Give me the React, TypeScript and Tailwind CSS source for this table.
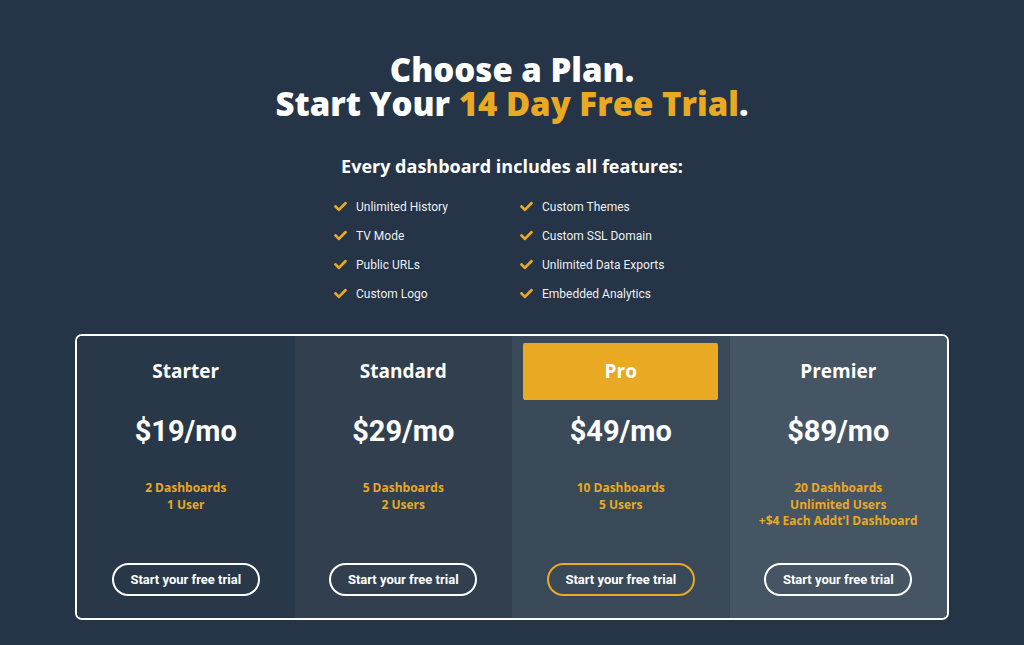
import React from "react";
import { FaCheck } from "react-icons/fa";

const features = [
  ["Unlimited History", "Custom Themes"],
  ["TV Mode", "Custom SSL Domain"],
  ["Public URLs", "Unlimited Data Exports"],
  ["Custom Logo", "Embedded Analytics"],
];

type Plan = {
  name: string;
  price: string;
  lines: string[];
  bg: string;
  highlight?: boolean;
};

const plans: Plan[] = [
  { name: "Starter", price: "$19/mo", lines: ["2 Dashboards", "1 User"], bg: "bg-[#283848]" },
  { name: "Standard", price: "$29/mo", lines: ["5 Dashboards", "2 Users"], bg: "bg-[#313f4f]" },
  { name: "Pro", price: "$49/mo", lines: ["10 Dashboards", "5 Users"], bg: "bg-[#3a4958]", highlight: true },
  {
    name: "Premier",
    price: "$89/mo",
    lines: ["20 Dashboards", "Unlimited Users", "+$4 Each Addt'l Dashboard"],
    bg: "bg-[#465563]",
  },
];

const open = { fontFamily: '"Open Sans", "Noto Sans", sans-serif' };
const roboto = { fontFamily: 'Roboto, "Liberation Sans", sans-serif' };

const PlanColumn: React.FC<{ plan: Plan }> = ({ plan }) => (
  <div className={plan.bg + " flex flex-col items-center pt-[7px] pb-[22px]"}>
    <div
      className={
        "h-[57px] w-[195px] flex items-center justify-center rounded-[2px] " +
        (plan.highlight ? "bg-[#e9a922]" : "")
      }
    >
      <h3 className="text-white text-[19px] font-bold" style={open}>
        {plan.name}
      </h3>
    </div>
    <div className="mt-[11px] text-white text-[29px] leading-[40px] font-bold" style={roboto}>
      {plan.price}
    </div>
    <div className="mt-[29px] text-center text-[#e9a922] text-[12px] leading-[16.5px] font-bold" style={open}>
      {plan.lines.map((l) => (
        <div key={l}>{l}</div>
      ))}
    </div>
    <button
      className={
        "mt-auto w-[148px] h-[33px] rounded-full border-2 text-white text-[13px] font-bold " +
        (plan.highlight ? "border-[#e9a922]" : "border-white")
      }
      style={roboto}
    >
      Start your free trial
    </button>
  </div>
);

export default function App() {
  return (
    <div className="min-h-screen w-full bg-[#253547] flex flex-col items-center pt-[53px]">
      <h1 className="text-white text-[33px] leading-[34px] font-extrabold text-center" style={open}>
        <div>Choose a Plan.</div>
        <div>
          Start Your <span className="text-[#e9a922]">14 Day Free Trial</span>.
        </div>
      </h1>
      <h2 className="mt-[33px] text-white text-[18px] leading-[24px] font-bold" style={open}>
        Every dashboard includes all features:
      </h2>
      <div className="mt-[14px] w-[356px] grid grid-cols-[186px_170px]" style={roboto}>
        {features.map((row) =>
          row.map((f) => (
            <div key={f} className="flex items-center h-[29px] text-white/95 text-[12px]">
              <FaCheck className="text-[#e9a922] w-[13px] h-[13px] mr-[9px]" />
              {f}
            </div>
          ))
        )}
      </div>
      <div className="mt-[26px] w-[874px] h-[286px] border-2 border-white rounded-[7px] overflow-hidden grid grid-cols-4">
        {plans.map((p) => (
          <PlanColumn key={p.name} plan={p} />
        ))}
      </div>
    </div>
  );
}
